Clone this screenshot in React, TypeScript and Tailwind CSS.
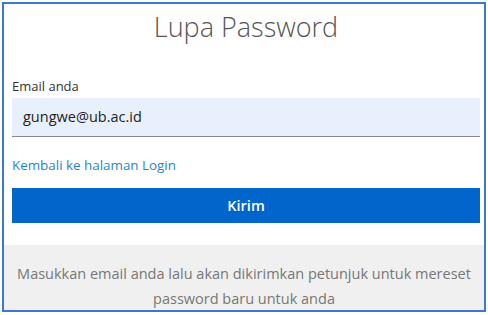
export default function App() {
  return (
    <div className="w-[488px] h-[315px] bg-white overflow-hidden font-['Open_Sans',sans-serif]">
      <div className="ml-[2px] mt-[2px] w-[484px] h-[310px] border-2 border-[#3a78d2] bg-white overflow-hidden flex flex-col">
        {/* Form */}
        <div className="pl-[8px] pr-[4px] pt-[5px]">
          <h1 className="text-center text-[27px] leading-[36px] font-light text-[#555]">Lupa Password</h1>

          <label className="block mt-[32px] text-[13px] leading-[18px] text-[#333]">Email anda</label>
          <div className="mt-[3px] h-[39px] bg-[#e8f0fe] border-b border-[#8a8a8a] flex items-center pl-[11px]">
            <span className="text-[14.5px] text-[#222]">gungwe@ub.ac.id</span>
          </div>

          <a className="block mt-[19px] text-[13.4px] leading-[18px] text-[#1f86d1]">Kembali ke halaman Login</a>

          <button className="mt-[14px] w-full h-[35px] bg-[#0066cc] text-white text-[14.5px] font-semibold flex items-center justify-center">
            Kirim
          </button>
        </div>

        {/* Footer note */}
        <div className="mt-[22px] flex-1 bg-[#f0f0f0] pt-[16px] px-[6px] text-center text-[14.5px] leading-[25px] text-[#777]">
          Masukkan email anda lalu akan dikirimkan petunjuk untuk mereset password baru untuk anda
        </div>
      </div>
    </div>
  );
}
